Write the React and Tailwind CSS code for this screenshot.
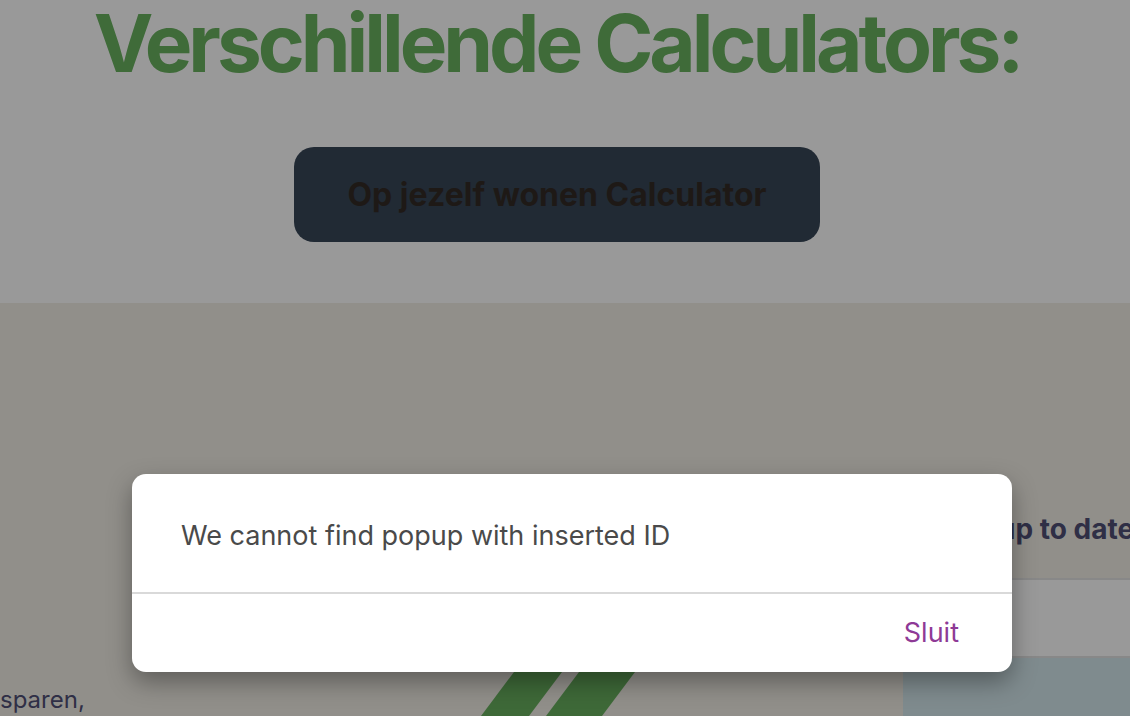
export default function App() {
  return (
    <div className="relative h-[716px] w-full overflow-hidden bg-[#f2eee6] font-['Inter',sans-serif]">
      {/* top section */}
      <section className="flex h-[303px] flex-col items-center bg-white pr-4">
        <h1 className="mt-[3px] text-[80px] font-bold leading-none tracking-[-0.05em] text-[#69b25f]">
          Verschillende Calculators:
        </h1>
        <button className="mt-16 flex h-[95px] w-[526px] items-center justify-center rounded-[20px] bg-[#374658] text-[32px] font-bold text-[#322b26]">
          Op jezelf wonen Calculator
        </button>
      </section>

      {/* lower section */}
      <section className="flex h-[413px]">
        <div className="w-[440px] shrink-0 pt-[385px]">
          <p className="text-[24px] leading-none text-[#4f4f75]">sparen,</p>
        </div>
        <div className="w-[463px] shrink-0 pt-[297px]">
          <svg width="260" height="140" viewBox="0 0 260 140">
            <polygon points="128,0 176,0 71,140 23,140" fill="#68b05e" />
            <polygon points="193,0 249,0 144,140 88,140" fill="#68b05e" />
          </svg>
        </div>
        <div className="flex-1 pt-[212px]">
          <h2 className="pl-[36px] text-[28px] font-bold leading-none whitespace-nowrap text-[#4f4f75]">
            Blijf up to date
          </h2>
          <div className="mt-[35px] h-[80px] border-y-2 border-[#e3e3e3] bg-white" />
          <div className="h-[100px] bg-[#d4e8ed]" />
        </div>
      </section>

      {/* overlay */}
      <div className="absolute inset-0 bg-black/40" />

      {/* modal */}
      <div className="absolute left-[132px] top-[474px] w-[880px] overflow-hidden rounded-[14px] bg-white shadow-[0_10px_24px_rgba(0,0,0,0.35)]">
        <div className="flex h-[118px] items-center pl-[49px] pt-[6px]">
          <p className="text-[27px] text-[#4a4a4a]">We cannot find popup with inserted ID</p>
        </div>
        <div className="h-[2px] bg-[#d9d9d9]" />
        <div className="flex h-[78px] items-center justify-end pr-[53px]">
          <button className="text-[27px] text-[#8e3a96]">Sluit</button>
        </div>
      </div>
    </div>
  );
}
